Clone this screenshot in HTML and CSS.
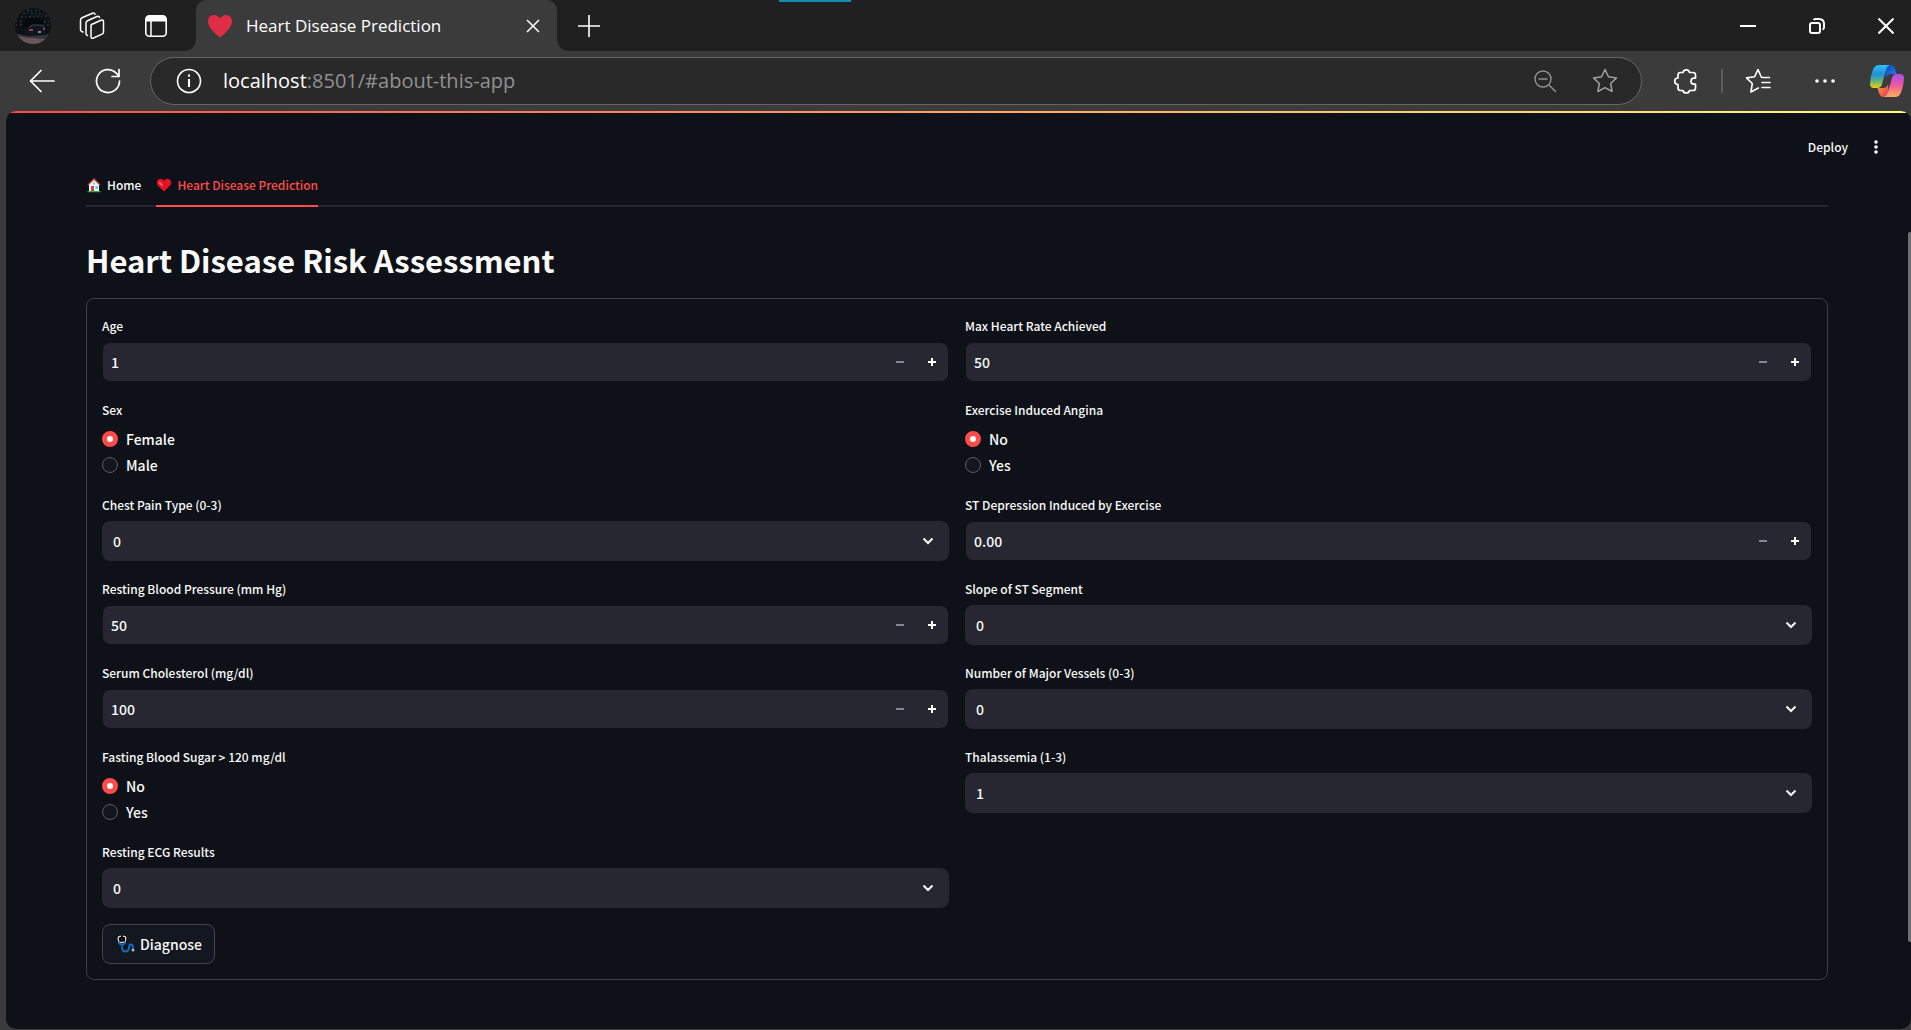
FILE: index.html
```html
<!DOCTYPE html>
<html lang="en">
<head>
<meta charset="utf-8">
<title>Heart Disease Prediction</title>
<meta name="viewport" content="width=device-width, initial-scale=1">
<link rel="stylesheet" href="styles.css">
</head>
<body>
<div class="browser">
  <header class="tabstrip">
    <div class="load-mark"></div>
    <button class="tool avatar" aria-label="Profile">
      <svg width="38" height="38" viewBox="0 0 38 38"><defs><clipPath id="face"><circle cx="19" cy="19" r="18"/></clipPath></defs><g clip-path="url(#face)"><path fill="#0c1116" d="M0 0h38v38H0z"/><path fill="none" stroke="#2b373e" stroke-width="1.500" stroke-dasharray="1 3 2 2" d="M5 6l28 1M3 10l30-1M2 14l34 1M9 3l20 1M2 18l9-1M29 18h8"/><path fill="#06090d" d="M9 13q10-4 20 0v7H9z"/><path fill="#37343a" d="M0 26l14 3 24-2v11H0z"/><path fill="#675759" d="M3 29l12 2 16 1-5 5H9z"/><path fill="#10161d" d="M12 23l4-5h10l6 4v6l-14 1-6-2z"/><path stroke="#c2504f" stroke-width="1.500" d="M15 23h4M29 22h2"/><path fill="none" stroke="#3c4854" d="M15 21l3-3h9l4 3"/><path stroke="#a9b0b6" stroke-width="1.500" d="M24 25h3"/></g></svg>
    </button>
    <button class="tool" aria-label="Workspaces">
      <svg width="26" height="28" viewBox="0 0 26 28" fill="none" stroke="#fff" stroke-width="1.500" stroke-linejoin="round" stroke-linecap="round"><path d="M12.500 12.500 22 8.200q2.500-1 2.500 1.500v10.200q0 1.500-1.500 2.200L14.500 26q-2.500 1-2.500-1.500V13.500q0-.7.5-1zM8.500 23.500Q7 23 7 21.500V11q0-1.500 1.500-2.200L18 4.500q2-.8 2.500 1M4 20Q1.500 19.500 1.500 17.500V8q0-1.500 1.500-2.200L13.500 1.200q2-.7 2.500 1"/></svg>
    </button>
    <button class="tool" aria-label="Tab actions">
      <svg width="24" height="24" viewBox="0 0 24 24"><rect x="1.800" y="1.800" width="20.400" height="20.400" rx="3.500" fill="none" stroke="#fff" stroke-width="1.600"/><path fill="#fff" d="M2 7.500V5q0-3 3-3h14q3 0 3 3v2.500z"/><path stroke="#fff" stroke-width="1.500" d="M7 7v15"/></svg>
    </button>
    <div class="tab">
      <svg width="26" height="24" viewBox="0 0 26 24"><path fill="#dd2e44" d="M13 23.500C8 19.500 1 13.500 1 7.500 1 3.500 3.500 1 7 1c2.500 0 4.800 1.300 6 3.600C14.200 2.300 16.500 1 19 1c3.500 0 6 2.500 6 6.500 0 6-7 12-12 16z"/></svg>
      <span class="tab-title">Heart Disease Prediction</span>
      <button class="tool" aria-label="Close tab"><svg width="14" height="14" viewBox="0 0 14 14" stroke="#fff" stroke-width="1.500"><path d="M1 1l12 12M13 1 1 13"/></svg></button>
    </div>
    <button class="tool new-tab" aria-label="New tab"><svg width="22" height="22" viewBox="0 0 22 22" stroke="#fff" stroke-width="1.600"><path d="M11 0v22M0 11h22"/></svg></button>
    <div class="window-buttons">
      <button class="tool" aria-label="Minimize"><svg width="16" height="16" viewBox="0 0 16 16" stroke="#fff" stroke-width="2"><path d="M0 8h16"/></svg></button>
      <button class="tool" aria-label="Restore"><svg width="16" height="16" viewBox="0 0 16 16" fill="none" stroke="#fff" stroke-width="2"><rect x="1" y="5" width="10" height="10" rx="2"/><path d="M4.500 2Q5 1 6.500 1H10q5 0 5 5v3.500q0 1.500-1.500 2"/></svg></button>
      <button class="tool" aria-label="Close window"><svg width="16" height="16" viewBox="0 0 16 16" stroke="#fff" stroke-width="2"><path d="M.5.5l15 15M15.500.5l-15 15"/></svg></button>
    </div>
  </header>

  <nav class="toolbar" aria-label="Browser toolbar">
    <button class="tool" aria-label="Back"><svg width="26" height="24" viewBox="0 0 26 24" fill="none" stroke="#fff" stroke-width="1.700" stroke-linecap="round" stroke-linejoin="round"><path d="M25 12H1.500M12 1.500 1.500 12 12 22.500"/></svg></button>
    <button class="tool reload" aria-label="Refresh"><svg width="26" height="26" viewBox="0 0 26 26" fill="none" stroke="#fff" stroke-width="1.700" stroke-linecap="round"><path d="M24.500 13A11.500 11.500 0 1 1 21 4.800L23.500 7.500M24 1.500v7h-7"/></svg></button>
    <div class="address">
      <svg width="26" height="26" viewBox="0 0 26 26" fill="none" stroke="#fff" stroke-width="1.600"><circle cx="13" cy="13" r="11.500"/><path stroke-width="2" d="M13 11v8M13 6.500v2.200"/></svg>
      <a class="url" href="#about-this-app"><span class="host">localhost</span>:8501/#about-this-app</a>
      <button class="tool" aria-label="Zoom"><svg width="24" height="24" viewBox="0 0 24 24" fill="none" stroke="#8f8f8f" stroke-width="1.500" stroke-linecap="round"><circle cx="10" cy="10" r="8"/><path d="M6 10h8M16 16l6.500 6.500"/></svg></button>
      <button class="tool star" aria-label="Add to favorites"><svg width="26" height="26" viewBox="0 0 26 26" fill="none" stroke="#a0a0a0" stroke-width="1.500" stroke-linejoin="round"><path d="M13 1.500l3.500 7.300 8 1.100-5.800 5.600 1.400 8-7.100-3.800-7.100 3.800 1.400-8L1.500 9.900l8-1.100z"/></svg></button>
    </div>
    <button class="tool" aria-label="Extensions"><svg width="26" height="26" viewBox="0 0 26 26" fill="none" stroke="#fff" stroke-width="1.700" stroke-linejoin="round"><path d="M10 4.500a3.300 3.200 0 0 1 6.500 0H20q2.500 0 2.500 2.500v3.200h-1.500a3 3 0 0 0 0 6h1.500V20q0 2.500-2.500 2.500h-3.500a3.300 3 0 0 1-6.500 0H7.500Q5 22.500 5 20v-3.500a3.200 3.200 0 0 1 0-6.500V7q0-2.500 2.500-2.500z"/></svg></button>
    <span class="divider"></span>
    <button class="tool" aria-label="Favorites"><svg width="26" height="26" viewBox="0 0 26 26" fill="none" stroke="#fff" stroke-width="1.600" stroke-linejoin="round" stroke-linecap="round"><path d="M24.500 9.500h-8l-3.500-8-3.500 7.300-8 1.100 5.800 5.600-1.400 8.500 7.500-4M17 14.500h8M17 19.500h8"/></svg></button>
    <button class="tool more" aria-label="Settings and more"><svg width="20" height="4" viewBox="0 0 20 4" fill="#fff"><circle cx="2" cy="2" r="1.800"/><circle cx="10" cy="2" r="1.800"/><circle cx="18" cy="2" r="1.800"/></svg></button>
    <button class="tool" aria-label="Copilot">
      <svg width="34" height="32" viewBox="0 0 34 32"><defs>
        <linearGradient id="cpA" x1="0" y1="0" x2="0" y2="1"><stop offset="0" stop-color="#2cc2f5"/><stop offset=".4" stop-color="#1d8fdc"/><stop offset=".7" stop-color="#5fb57a"/><stop offset="1" stop-color="#f8cf10"/></linearGradient>
        <linearGradient id="cpB" x1="0" y1="0" x2="0" y2="1"><stop offset="0" stop-color="#a94df0"/><stop offset=".5" stop-color="#ee5a9b"/><stop offset="1" stop-color="#ffb057"/></linearGradient>
        <linearGradient id="cpC" x1="0" y1="0" x2="1" y2="1"><stop offset="0" stop-color="#0b3fbd"/><stop offset="1" stop-color="#2b8af0"/></linearGradient>
        <linearGradient id="cpD" x1="0" y1="0" x2="1" y2="1"><stop offset="0" stop-color="#ff9a3c"/><stop offset="1" stop-color="#e0385a"/></linearGradient></defs>
        <path fill="url(#cpC)" d="M15 0h5q4 0 5 4l1.500 5H21q-4 0-5 4z"/>
        <path fill="url(#cpD)" d="M19 32h-5q-4 0-5-4l-1.500-5H13q4 0 5-4z"/>
        <path fill="url(#cpA)" d="M9 0h11q-3 1-4 5l-4 14q-1 4-5 4H4q-4 0-4-4Q0 12 3 4.500 5 0 9 0z"/>
        <path fill="url(#cpB)" d="M25 32H14q3-1 4-5l4-14q1-4 5-4h3q4 0 4 4 0 7-3 14.500Q29 32 25 32z"/></svg>
    </button>
  </nav>

  <div class="viewport">
    <div class="decoration"></div>
    <div class="scroll-thumb"></div>
    <div class="app-header">
      <button class="deploy">Deploy</button>
      <button class="tool" aria-label="Main menu"><svg width="4" height="14" viewBox="0 0 4 14" fill="#fafafa"><circle cx="2" cy="2" r="1.800"/><circle cx="2" cy="7" r="1.800"/><circle cx="2" cy="12" r="1.800"/></svg></button>
    </div>
    <main class="content">
      <div class="tabs" role="tablist">
        <button class="page-tab" role="tab" aria-selected="false">
          <svg width="16" height="16" viewBox="0 0 16 16"><path fill="#f4f4f4" d="M3 7l5-4.500L13 7v7H3z"/><path fill="none" stroke="#c9473a" stroke-width="1.300" d="M2 8l6-6 6 6"/><path fill="#4fd0f5" d="M7 5.500h2v2H7zM9.500 9H12v3H9.500z"/><path fill="#c9473a" d="M5 9h3v5H5z"/><path fill="#2fae3c" d="M1.500 14h13v1.200h-13z"/></svg>Home</button>
        <button class="page-tab active" role="tab" aria-selected="true">
          <svg width="16" height="14" viewBox="0 0 16 14"><path fill="#e81224" d="M8 13.500 1.800 7.400Q0 5.200 1.200 2.800 2.300.8 4.600.8 6.800.8 8 3 9.200.8 11.400.8q2.300 0 3.400 2Q16 5.200 14.200 7.400z"/><path fill="none" stroke="#ff7a70" stroke-width="1.500" stroke-linecap="round" d="M3.500 4.500 6 7"/></svg>Heart Disease Prediction</button>
      </div>
      <h1 class="title">Heart Disease Risk Assessment</h1>

      <form class="form">
        <div class="column">
          <div class="field">
            <label class="label" for="age">Age</label>
            <div class="number"><input id="age" type="text" inputmode="numeric" value="1"><button type="button" class="step" aria-label="Decrease age" disabled><svg width="8" height="8"><use href="#minus"/></svg></button><button type="button" class="step" aria-label="Increase age"><svg width="8" height="8"><use href="#plus"/></svg></button></div>
          </div>
          <fieldset class="field">
            <legend class="label">Sex</legend>
            <div class="choices">
              <label class="choice"><input type="radio" name="sex" checked>Female</label>
              <label class="choice"><input type="radio" name="sex">Male</label>
            </div>
          </fieldset>
          <div class="field">
            <label class="label" for="cp">Chest Pain Type (0-3)</label>
            <div class="select"><select id="cp"><option>0</option><option>1</option><option>2</option><option>3</option></select><svg class="chevron" width="12" height="8"><use href="#down"/></svg></div>
          </div>
          <div class="field">
            <label class="label" for="bp">Resting Blood Pressure (mm Hg)</label>
            <div class="number"><input id="bp" type="text" inputmode="numeric" value="50"><button type="button" class="step" aria-label="Decrease blood pressure" disabled><svg width="8" height="8"><use href="#minus"/></svg></button><button type="button" class="step" aria-label="Increase blood pressure"><svg width="8" height="8"><use href="#plus"/></svg></button></div>
          </div>
          <div class="field">
            <label class="label" for="chol">Serum Cholesterol (mg/dl)</label>
            <div class="number"><input id="chol" type="text" inputmode="numeric" value="100"><button type="button" class="step" aria-label="Decrease cholesterol" disabled><svg width="8" height="8"><use href="#minus"/></svg></button><button type="button" class="step" aria-label="Increase cholesterol"><svg width="8" height="8"><use href="#plus"/></svg></button></div>
          </div>
          <fieldset class="field">
            <legend class="label">Fasting Blood Sugar &gt; 120 mg/dl</legend>
            <div class="choices">
              <label class="choice"><input type="radio" name="fbs" checked>No</label>
              <label class="choice"><input type="radio" name="fbs">Yes</label>
            </div>
          </fieldset>
          <div class="field">
            <label class="label" for="ecg">Resting ECG Results</label>
            <div class="select"><select id="ecg"><option>0</option><option>1</option><option>2</option></select><svg class="chevron" width="12" height="8"><use href="#down"/></svg></div>
          </div>
        </div>

        <div class="column">
          <div class="field">
            <label class="label" for="rate">Max Heart Rate Achieved</label>
            <div class="number"><input id="rate" type="text" inputmode="numeric" value="50"><button type="button" class="step" aria-label="Decrease heart rate" disabled><svg width="8" height="8"><use href="#minus"/></svg></button><button type="button" class="step" aria-label="Increase heart rate"><svg width="8" height="8"><use href="#plus"/></svg></button></div>
          </div>
          <fieldset class="field">
            <legend class="label">Exercise Induced Angina</legend>
            <div class="choices">
              <label class="choice"><input type="radio" name="angina" checked>No</label>
              <label class="choice"><input type="radio" name="angina">Yes</label>
            </div>
          </fieldset>
          <div class="field">
            <label class="label" for="st">ST Depression Induced by Exercise</label>
            <div class="number"><input id="st" type="text" inputmode="decimal" value="0.00"><button type="button" class="step" aria-label="Decrease ST depression" disabled><svg width="8" height="8"><use href="#minus"/></svg></button><button type="button" class="step" aria-label="Increase ST depression"><svg width="8" height="8"><use href="#plus"/></svg></button></div>
          </div>
          <div class="field">
            <label class="label" for="slope">Slope of ST Segment</label>
            <div class="select"><select id="slope"><option>0</option><option>1</option><option>2</option></select><svg class="chevron" width="12" height="8"><use href="#down"/></svg></div>
          </div>
          <div class="field">
            <label class="label" for="vessels">Number of Major Vessels (0-3)</label>
            <div class="select"><select id="vessels"><option>0</option><option>1</option><option>2</option><option>3</option></select><svg class="chevron" width="12" height="8"><use href="#down"/></svg></div>
          </div>
          <div class="field">
            <label class="label" for="thal">Thalassemia (1-3)</label>
            <div class="select"><select id="thal"><option>1</option><option>2</option><option>3</option></select><svg class="chevron" width="12" height="8"><use href="#down"/></svg></div>
          </div>
        </div>

        <button type="button" class="diagnose">
          <svg width="18" height="18" viewBox="0 0 18 18" fill="none" stroke-linecap="round"><path stroke="#000" stroke-width="3.500" d="M3 1.500q-2 0-1.500 3T5 9q3-1 3.500-4T7 1.500"/><path stroke="#d8d4d0" stroke-width="1.400" d="M3.500 1.200q-2.300 0-2.300 2T2 7.500h6q.8-2.300.8-4.300T6.500 1.200"/><path stroke="#0f6cc4" stroke-width="1.800" d="M1.800 7.500Q3 10 5 10t3.200-2.500M5 10v3q.5 3.500 3.500 3.500T12 13q0-3.500 2-3.500t2 3.500"/><circle cx="16" cy="15" r="1.500" fill="#b9b9b9"/></svg>Diagnose</button>
      </form>
    </main>
  </div>
</div>
<svg class="symbols" aria-hidden="true">
  <symbol id="minus" viewBox="0 0 8 8"><path fill="currentColor" d="M0 3h8v2H0z"/></symbol>
  <symbol id="plus" viewBox="0 0 8 8"><path fill="currentColor" d="M0 3h3V0h2v3h3v2H5v3H3V5H0z"/></symbol>
  <symbol id="down" viewBox="0 0 12 8"><path fill="none" stroke="#fafafa" stroke-width="2" d="M1.500 1.500 6 6l4.500-4.500"/></symbol>
</svg>
</body>
</html>
```
FILE: styles.css
```css
* { box-sizing: border-box; }

body {
  margin: 0;
  background: #3b3b3b;
  color: #fafafa;
  font: 500 14px/24px "Noto Sans CJK SC", "Noto Sans", sans-serif;
}

button, input, select { font: inherit; color: inherit; }
svg { display: block; flex: none; }
.symbols { display: none; }

.browser {
  display: flex;
  flex-direction: column;
  min-height: 100vh;
}

.tool {
  display: flex;
  padding: 0;
  border: 0;
  background: none;
}

/* Browser tab strip */
.tabstrip {
  position: relative;
  display: flex;
  align-items: center;
  height: 51px;
  padding: 0 17px 0 14px;
  background: #202020;
  font-family: "Open Sans", sans-serif;
  font-weight: 400;
}
.load-mark {
  position: absolute;
  top: 0;
  left: 779px;
  width: 72px;
  height: 2px;
  background: #0f8fb3;
}
.avatar { margin-right: -12px; }
.tabstrip > .tool + .tool { margin-left: 39px; }
.tab {
  position: relative;
  display: flex;
  align-items: center;
  width: 361px;
  height: 51px;
  margin-left: 28px;
  padding: 0 17px 0 11px;
  border-radius: 10px 10px 0 0;
  background: #3b3b3b;
}
.tab::before, .tab::after {
  content: "";
  position: absolute;
  bottom: 0;
  width: 10px;
  height: 10px;
}
.tab::before { right: 100%; background: radial-gradient(circle at 0 0, #202020 9px, #3b3b3b 10px); }
.tab::after { left: 100%; background: radial-gradient(circle at 100% 0, #202020 9px, #3b3b3b 10px); }
.tab-title { flex: 1; margin-left: 13px; font-size: 17px; color: #fff; }
.new-tab { margin-left: 21px; }
.window-buttons { display: flex; gap: 53px; margin-left: auto; }

/* Browser toolbar */
.toolbar {
  display: flex;
  align-items: center;
  height: 60px;
  padding: 0 7px 0 29px;
  font-family: "Open Sans", sans-serif;
  font-weight: 400;
}
.reload { margin-left: 40px; }
.address {
  flex: 1;
  display: flex;
  align-items: center;
  height: 48px;
  margin: 0 31px 0 29px;
  padding: 0 23px 0 25px;
  border: 1px solid #666;
  border-radius: 24px;
  background: #292929;
}
.url { flex: 1; margin-left: 21px; font-size: 20px; color: #919191; text-decoration: none; }
.host { color: #fff; }
.star { margin-left: 35px; }
.divider { width: 2px; height: 24px; margin: 0 22px; background: #5c5c5c; }
.more { margin: 0 35px 0 44px; }

/* Streamlit page */
.viewport {
  position: relative;
  flex: 1;
  margin: 0 0 1px 6px;
  border-radius: 10px;
  background: #0e1117;
  overflow: hidden;
}
.decoration { height: 2px; background: linear-gradient(90deg, #ff4b4b, #fffd80); }
.scroll-thumb {
  position: absolute;
  top: 121px;
  right: 0;
  width: 3px;
  height: 710px;
  border-radius: 2px 0 0 2px;
  background: #6f6f6f;
}
.app-header {
  display: flex;
  justify-content: flex-end;
  align-items: center;
  gap: 26px;
  padding: 22px 33px 0 0;
}
.deploy { padding: 0; border: 0; background: none; font-size: 12px; }

.content { padding: 8px 83px 48px 80px; }
.tabs {
  display: flex;
  gap: 15px;
  border-bottom: 2px solid #262730;
}
.page-tab {
  display: flex;
  align-items: center;
  gap: 5px;
  height: 40px;
  margin-bottom: -2px;
  padding: 0 0 2px;
  border: 0;
  border-bottom: 2px solid transparent;
  background: none;
  font-size: 12px;
}
.page-tab.active { border-color: #ff4b4b; color: #ff4b4b; }
.title { margin: 30px 0 15px; font-size: 31px; line-height: 46px; font-weight: 700; }

.form {
  display: grid;
  grid-template-columns: 1fr 1fr;
  gap: 16px;
  padding: 15px;
  border: 1px solid #3d3f45;
  border-radius: 8px;
}
.column { display: flex; flex-direction: column; gap: 16px; min-width: 0; }
.field { margin: 0; padding: 0; border: 0; min-width: 0; }
.label { display: block; padding: 0; margin-bottom: 4px; font-size: 12px; line-height: 24px; }

.number {
  display: flex;
  height: 40px;
  border: 1px solid #0e1117;
  border-radius: 8px;
  background: #262730;
  overflow: hidden;
}
.number input {
  flex: 1;
  min-width: 0;
  padding: 0 8px;
  border: 0;
  outline: 0;
  background: none;
}
.step {
  display: flex;
  align-items: center;
  justify-content: center;
  width: 32px;
  padding: 0;
  border: 0;
  background: none;
  color: #fff;
}
.step:disabled { color: #83859a; }

.select { position: relative; }
.select select {
  display: block;
  width: 100%;
  height: 40px;
  padding: 0 32px 0 11px;
  border: 0;
  border-radius: 8px;
  background: #262730;
  appearance: none;
}
.chevron { position: absolute; top: 16px; right: 15px; pointer-events: none; }

.choices { display: grid; gap: 2px; padding-top: 1px; }
.choice { display: flex; align-items: center; gap: 8px; line-height: 24px; }
.choice input {
  width: 16px;
  height: 16px;
  margin: 0;
  border: 1px solid #5b5d64;
  border-radius: 50%;
  background: #12161d;
  appearance: none;
}
.choice input:checked { border: 5px solid #ff4b4b; background: #fafafa; }

.diagnose {
  grid-column: 1 / -1;
  justify-self: start;
  display: flex;
  align-items: center;
  gap: 5px;
  height: 40px;
  padding: 0 12px 0 14px;
  border: 1px solid #41444c;
  border-radius: 8px;
  background: #131720;
}
```
